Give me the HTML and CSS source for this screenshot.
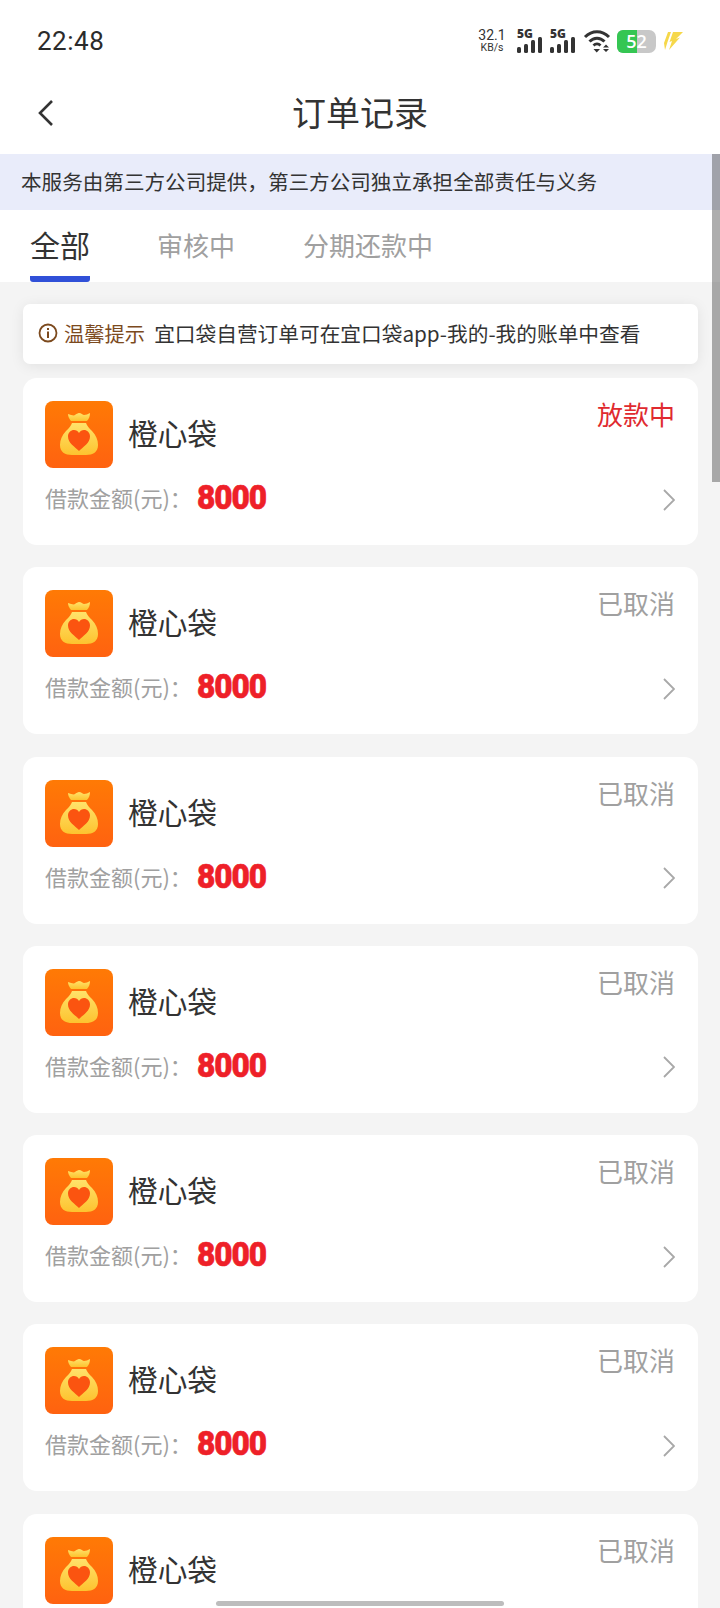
FILE: index.html
```html
<!DOCTYPE html>
<html lang="zh-CN">
<head>
<meta charset="utf-8">
<title>订单记录</title>
<link rel="stylesheet" href="styles.css">
</head>
<body>
<svg class="defs" width="0" height="0" aria-hidden="true">
  <defs>
    <linearGradient id="bg" x1="0" y1="0" x2="0" y2="1"><stop offset="0" stop-color="#ff7a05"/><stop offset="1" stop-color="#ff6210"/></linearGradient>
    <linearGradient id="bag" x1="0" y1="0" x2="0" y2="1"><stop offset="0" stop-color="#ffe26a"/><stop offset="1" stop-color="#fdc32f"/></linearGradient>
    <symbol id="logo" viewBox="0 0 68 67">
      <rect width="68" height="67" rx="8" fill="url(#bg)"/>
      <path d="M23 13 C26 14 29 15 30 14 C31 13 33 12 34 12 C36 12 38 14 39 14 C41 14 43 13 45 12 C45 15 44 18 42 20 H26 C24 18 23 15 23 13 Z" fill="url(#bag)"/>
      <path d="M27 22 H41 C42 25 44 27 47 30 C51 34 53 39 53 44 C53 51 48 54 41 54 H27 C20 54 15 51 15 44 C15 39 17 34 21 30 C24 27 26 25 27 22 Z" fill="url(#bag)"/>
      <path d="M34 50 C30 46 23 42 23 35.500 C23 31.500 26 29 29 29 C31 29 33 30 34 32 C35 30 37 29 39 29 C42 29 45 31.500 45 35.500 C45 42 38 46 34 50 Z" fill="#fb5410"/>
    </symbol>
    <symbol id="chev" viewBox="0 0 12 22">
      <path d="M1 1 L11 11 L1 21" fill="none" stroke="#a8a8a8" stroke-width="1.800"/>
    </symbol>
    <symbol id="signal" viewBox="0 0 26 16">
      <rect x="0" y="10" width="4" height="6" rx="1.500"/><rect x="7" y="7" width="4" height="9" rx="1.500"/><rect x="14" y="3" width="4" height="13" rx="1.500"/><rect x="21" y="0" width="4" height="16" rx="1.500"/>
    </symbol>
  </defs>
</svg>

<div class="page">
  <div class="status">
    <span class="time">22:48</span>
    <div class="status-icons">
      <div class="speed"><span class="speed-num">32.1</span><span class="speed-unit">KB/s</span></div>
      <div class="sim"><span class="sim-label">5G</span><svg class="sim-bars"><use href="#signal"/></svg></div>
      <div class="sim"><span class="sim-label">5G</span><svg class="sim-bars"><use href="#signal"/></svg></div>
      <svg class="wifi" viewBox="0 0 28 24">
        <path d="M2 8 C9 1 19 1 26 8" fill="none" stroke="#333" stroke-width="3"/>
        <path d="M6.500 12.500 C11 8 17 8 21.500 12.500" fill="none" stroke="#333" stroke-width="3"/>
        <path d="M10.500 16.500 C12.500 14.500 15.500 14.500 17.500 16.500" fill="none" stroke="#333" stroke-width="2.800"/>
        <path d="M10.500 20 H17 L13.700 23.500 Z M20 18.500 L23 15.500 L26 18.500 Z M20 20 H26 L23 23 Z" fill="#333"/>
      </svg>
      <div class="battery"><div class="battery-fill"></div><span class="battery-num">52</span></div>
      <svg class="bolt" viewBox="0 0 20 18">
        <path d="M5 0 H8 L4.500 10 L2 18 L1 11 Z M10 0 H20 L13 7 L17 5.500 L6 18 L9 9 L6.500 10 Z" fill="#f6d84a"/>
      </svg>
    </div>
  </div>

  <header class="nav">
    <svg class="back" viewBox="0 0 16 28"><path d="M14 2 L2 14 L14 26" fill="none" stroke="#333" stroke-width="2.600"/></svg>
    <h1 class="nav-title">订单记录</h1>
  </header>

  <div class="banner">本服务由第三方公司提供，第三方公司独立承担全部责任与义务</div>

  <nav class="tabs">
    <div class="tab tab-active">全部</div>
    <div class="tab tab-mid">审核中</div>
    <div class="tab tab-last">分期还款中</div>
  </nav>

  <main class="list">
    <div class="notice">
      <svg class="info" viewBox="0 0 20 20">
        <circle cx="10" cy="10" r="8.500" fill="none" stroke="#7c4a1e" stroke-width="1.800"/>
        <rect x="9" y="8.500" width="2" height="6.500" fill="#7c4a1e"/><rect x="9" y="5" width="2" height="2" fill="#7c4a1e"/>
      </svg>
      <span class="notice-label">温馨提示</span>
      <span class="notice-text">宜口袋自营订单可在宜口袋app-我的-我的账单中查看</span>
    </div>

    <article class="card">
      <div class="card-top"><svg class="logo"><use href="#logo"/></svg><span class="name">橙心袋</span><span class="state state-red">放款中</span></div>
      <div class="card-bottom"><span class="label">借款金额(元)：</span><span class="amount">8000</span><svg class="chev"><use href="#chev"/></svg></div>
    </article>
    <article class="card">
      <div class="card-top"><svg class="logo"><use href="#logo"/></svg><span class="name">橙心袋</span><span class="state">已取消</span></div>
      <div class="card-bottom"><span class="label">借款金额(元)：</span><span class="amount">8000</span><svg class="chev"><use href="#chev"/></svg></div>
    </article>
    <article class="card">
      <div class="card-top"><svg class="logo"><use href="#logo"/></svg><span class="name">橙心袋</span><span class="state">已取消</span></div>
      <div class="card-bottom"><span class="label">借款金额(元)：</span><span class="amount">8000</span><svg class="chev"><use href="#chev"/></svg></div>
    </article>
    <article class="card">
      <div class="card-top"><svg class="logo"><use href="#logo"/></svg><span class="name">橙心袋</span><span class="state">已取消</span></div>
      <div class="card-bottom"><span class="label">借款金额(元)：</span><span class="amount">8000</span><svg class="chev"><use href="#chev"/></svg></div>
    </article>
    <article class="card">
      <div class="card-top"><svg class="logo"><use href="#logo"/></svg><span class="name">橙心袋</span><span class="state">已取消</span></div>
      <div class="card-bottom"><span class="label">借款金额(元)：</span><span class="amount">8000</span><svg class="chev"><use href="#chev"/></svg></div>
    </article>
    <article class="card">
      <div class="card-top"><svg class="logo"><use href="#logo"/></svg><span class="name">橙心袋</span><span class="state">已取消</span></div>
      <div class="card-bottom"><span class="label">借款金额(元)：</span><span class="amount">8000</span><svg class="chev"><use href="#chev"/></svg></div>
    </article>
    <article class="card">
      <div class="card-top"><svg class="logo"><use href="#logo"/></svg><span class="name">橙心袋</span><span class="state">已取消</span></div>
      <div class="card-bottom"><span class="label">借款金额(元)：</span><span class="amount">8000</span><svg class="chev"><use href="#chev"/></svg></div>
    </article>
  </main>

  <div class="scrollbar"></div>
  <div class="home-bar"></div>
</div>
</body>
</html>
```

FILE: styles.css
```css
* { box-sizing: border-box; }

html, body {
  margin: 0;
  padding: 0;
  height: 1608px;
  overflow: hidden;
}

body {
  font-family: "Noto Sans CJK SC", "Noto Sans", sans-serif;
  color: #333;
  background: #f4f4f4;
}

.defs { position: absolute; }

.page {
  position: relative;
  width: 720px;
  height: 1608px;
  overflow: hidden;
  background: #f4f4f4;
}

/* status bar */
.status {
  height: 72px;
  padding: 10px 37px 0;
  display: flex;
  align-items: center;
  justify-content: space-between;
  background: #fff;
}

.time {
  font-family: Roboto, sans-serif;
  font-size: 26px;
  color: #2b2b2b;
  letter-spacing: 0.5px;
}

.status-icons {
  display: flex;
  align-items: center;
  height: 24px;
}

.speed {
  display: flex;
  flex-direction: column;
  align-items: center;
  width: 28px;
  margin-right: 11px;
  font-family: Roboto, sans-serif;
  color: #333;
}
.speed-num { font-size: 14px; line-height: 13px; }
.speed-unit { font-size: 10.500px; line-height: 11px; }

.sim {
  width: 26px;
  margin-right: 7px;
  display: flex;
  flex-direction: column;
}
.sim-label {
  font-family: "Open Sans", sans-serif;
  font-size: 12px;
  font-weight: 800;
  line-height: 8px;
  margin-bottom: -1px;
  color: #333;
}
.sim-bars {
  width: 26px;
  height: 16px;
  fill: #333;
  align-self: flex-end;
}

.wifi {
  width: 28px;
  height: 24px;
  margin-right: 6px;
}

.battery {
  position: relative;
  width: 39px;
  height: 23px;
  border-radius: 6px 7px 7px 6px;
  background: #c8c8c8;
  margin-right: 7px;
}
.battery-fill {
  width: 20px;
  height: 100%;
  background: #35c653;
  border-radius: 6px 0 0 6px;
}
.battery-num {
  position: absolute;
  left: 0;
  right: 0;
  top: 0;
  text-align: center;
  font-family: "Open Sans", sans-serif;
  font-size: 18px;
  font-weight: 600;
  line-height: 23px;
  color: #fff;
}

.bolt { width: 20px; height: 18px; }

/* nav */
.nav {
  position: relative;
  height: 82px;
  display: flex;
  align-items: center;
  justify-content: center;
  background: #fff;
}
.back {
  position: absolute;
  left: 38px;
  top: 27px;
  width: 16px;
  height: 28px;
}
.nav-title {
  margin: 0 0 2px;
  font-size: 34px;
  font-weight: 400;
  line-height: 1;
  color: #333;
}

/* banner */
.banner {
  height: 56px;
  padding: 0 0 2px 21px;
  display: flex;
  align-items: center;
  background: #e9ecfa;
  font-size: 20.580px;
  color: #333;
}

/* tabs */
.tabs {
  height: 72px;
  display: flex;
  background: #fff;
}
.tab {
  font-size: 26px;
  line-height: 70px;
  color: #a0a0a0;
}
.tab-active {
  position: relative;
  width: 60px;
  margin-left: 30px;
  font-size: 30px;
  line-height: 68px;
  color: #333;
  border-bottom: 6px solid #3050d8;
  border-radius: 0 0 3px 3px;
  height: 72px;
}
.tab-mid { margin-left: 67px; }
.tab-last { margin-left: 68px; }

/* list */
.list {
  padding: 22px 22px 0 23px;
  display: flex;
  flex-direction: column;
}

.notice {
  width: 675px;
  height: 60px;
  padding: 0 0 2px 15px;
  display: flex;
  align-items: center;
  background: #fff;
  border-radius: 7px;
  box-shadow: 0 2px 14px rgba(0, 0, 0, 0.08);
  font-size: 20.300px;
}
.info {
  width: 20px;
  height: 20px;
  margin-right: 6px;
  flex: none;
}
.notice-label {
  color: #7c4a1e;
  margin-right: 9px;
}
.notice-text { color: #333; font-size: 20.700px; }

.card {
  width: 675px;
  height: 167px;
  margin-top: 14px;
  margin-bottom: 8px;
  padding: 23px 23px 0 22px;
  background: #fff;
  border-radius: 14px;
}
.card + .card { margin-top: 14.250px; }

.card-top {
  display: flex;
  align-items: flex-start;
}
.logo {
  width: 68px;
  height: 67px;
  flex: none;
}
.name {
  margin-left: 15px;
  font-size: 29.700px;
  line-height: 63px;
  color: #333;
}
.state {
  margin-left: auto;
  font-size: 26px;
  line-height: 25px;
  color: #a0a0a0;
}
.state-red { color: #e02a2f; }

.card-bottom {
  height: 58px;
  display: flex;
  align-items: center;
}
.label {
  font-size: 22px;
  color: #a0a0a0;
  width: 152px;
}
.amount {
  display: inline-block;
  font-family: Roboto, sans-serif;
  font-size: 34px;
  line-height: 1;
  font-weight: 900;
  letter-spacing: -1.200px;
  color: #ee2028;
  -webkit-text-stroke: 0.600px #ee2028;
  transform: scaleX(0.93);
  transform-origin: left center;
}
.chev {
  margin-left: auto;
  margin-top: 5px;
  width: 12px;
  height: 22px;
}

/* overlays */
.scrollbar {
  position: absolute;
  top: 154px;
  right: 0;
  width: 8px;
  height: 328px;
  background: rgba(60, 60, 60, 0.42);
}
.home-bar {
  position: absolute;
  left: 216px;
  bottom: 2px;
  width: 288px;
  height: 5px;
  border-radius: 3px;
  background: #bdbdbd;
}
```
